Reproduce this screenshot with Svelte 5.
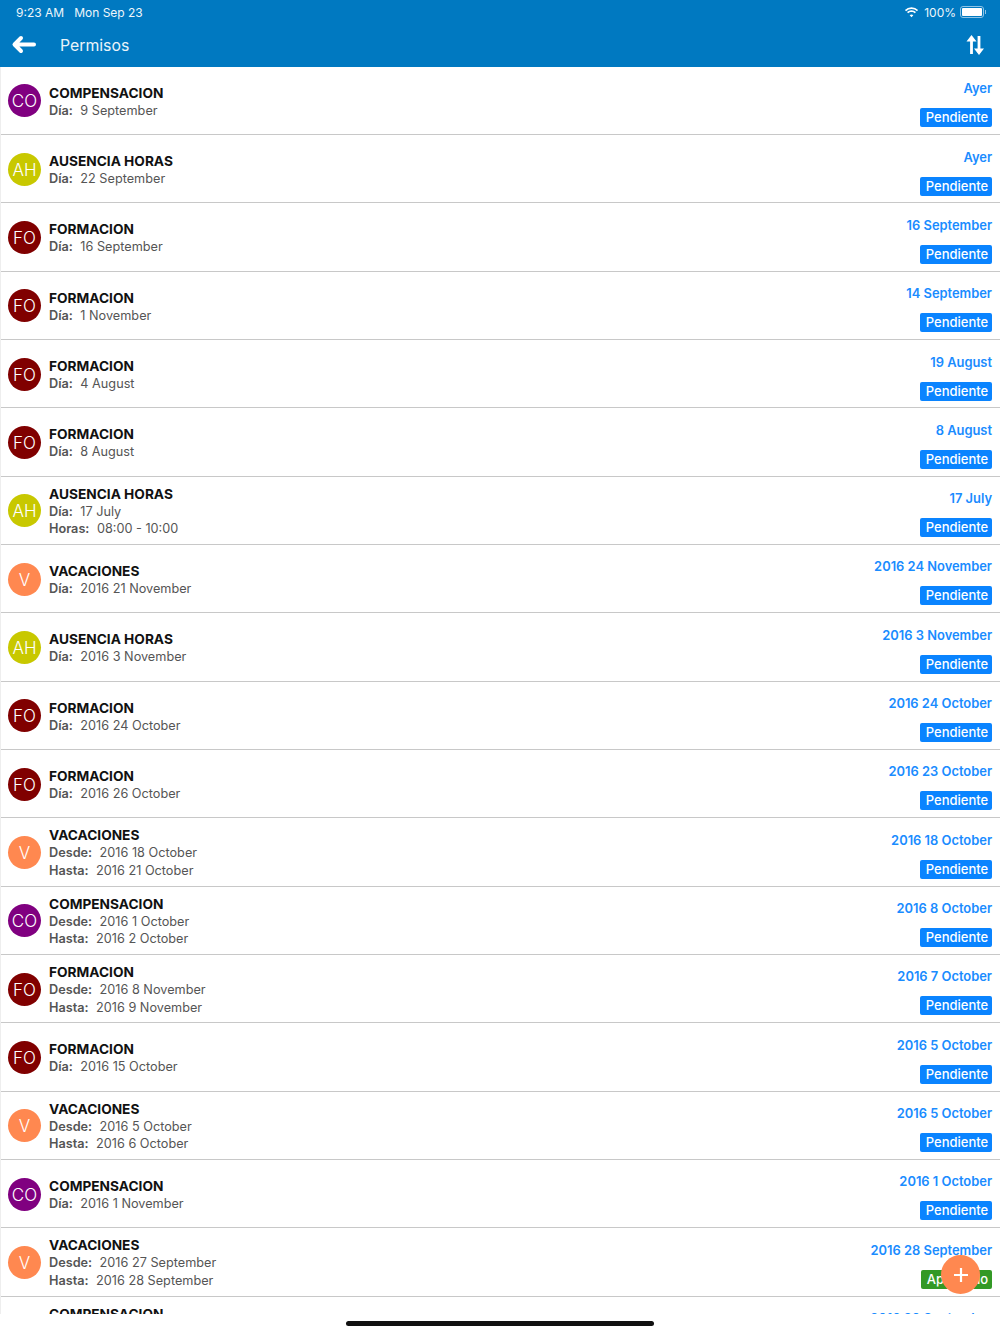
<script>
  const colors = { CO: '#800080', AH: '#c8c800', FO: '#800000', V: '#ff8850' };

  const rows = [
    ['CO', 'COMPENSACION', [['Día', '9 September']], 'Ayer'],
    ['AH', 'AUSENCIA HORAS', [['Día', '22 September']], 'Ayer'],
    ['FO', 'FORMACION', [['Día', '16 September']], '16 September'],
    ['FO', 'FORMACION', [['Día', '1 November']], '14 September'],
    ['FO', 'FORMACION', [['Día', '4 August']], '19 August'],
    ['FO', 'FORMACION', [['Día', '8 August']], '8 August'],
    ['AH', 'AUSENCIA HORAS', [['Día', '17 July'], ['Horas', '08:00 - 10:00']], '17 July'],
    ['V', 'VACACIONES', [['Día', '2016 21 November']], '2016 24 November'],
    ['AH', 'AUSENCIA HORAS', [['Día', '2016 3 November']], '2016 3 November'],
    ['FO', 'FORMACION', [['Día', '2016 24 October']], '2016 24 October'],
    ['FO', 'FORMACION', [['Día', '2016 26 October']], '2016 23 October'],
    ['V', 'VACACIONES', [['Desde', '2016 18 October'], ['Hasta', '2016 21 October']], '2016 18 October'],
    ['CO', 'COMPENSACION', [['Desde', '2016 1 October'], ['Hasta', '2016 2 October']], '2016 8 October'],
    ['FO', 'FORMACION', [['Desde', '2016 8 November'], ['Hasta', '2016 9 November']], '2016 7 October'],
    ['FO', 'FORMACION', [['Día', '2016 15 October']], '2016 5 October'],
    ['V', 'VACACIONES', [['Desde', '2016 5 October'], ['Hasta', '2016 6 October']], '2016 5 October'],
    ['CO', 'COMPENSACION', [['Día', '2016 1 November']], '2016 1 October'],
    ['V', 'VACACIONES', [['Desde', '2016 27 September'], ['Hasta', '2016 28 September']], '2016 28 September', 'Aprobado'],
    ['CO', 'COMPENSACION', [['Desde', '2016 20 September'], ['Hasta', '2016 21 September']], '2016 20 September']
  ];
</script>

<div class="page">
  <header>
    <div class="status">
      <span>9:23 AM</span>
      <span class="date">Mon Sep 23</span>
      <span class="spacer"></span>
      <svg class="wifi" width="15" height="11" viewBox="0 0 16 12">
        <path d="M8 2.200c2.300 0 4.400.9 5.900 2.400L15.200 3.300A10 10 0 0 0 8 .3a10 10 0 0 0-7.200 3l1.300 1.300A8.400 8.400 0 0 1 8 2.200z" fill="#fff"/>
        <path d="M8 5.400c1.400 0 2.700.5 3.700 1.400l1.200-1.300A7 7 0 0 0 8 3.600a7 7 0 0 0-4.900 1.900l1.200 1.300c1-.9 2.300-1.400 3.700-1.400z" fill="#fff"/>
        <path d="M8 8.200c-.8 0-1.500.3-2 .8L8 11.200 10 9c-.5-.5-1.200-.8-2-.8z" fill="#fff"/>
      </svg>
      <span>100%</span>
      <span class="battery"><span class="charge"></span></span>
      <span class="nub"></span>
    </div>
    <div class="toolbar">
      <svg width="26" height="20" viewBox="0 0 26 20">
        <path d="M10 3 3.500 9.500 10 16M4.500 9.500H23" fill="none" stroke="#fff" stroke-width="4" stroke-linecap="round" stroke-linejoin="round"/>
      </svg>
      <span class="title">Permisos</span>
      <span class="spacer"></span>
      <svg class="sort" width="18" height="20" viewBox="0 0 18 20">
        <path d="M5.500 19V2.500M13 1v16.500" fill="none" stroke="#fff" stroke-width="2.800"/>
        <path d="M5.500 0 .5 6.500h10zM13 20l5-6.500H8z" fill="#fff"/>
      </svg>
    </div>
  </header>

  <div class="list">
    {#each rows as [code, name, lines, when, state]}
      <div class="row">
        <div class="avatar" style="background: {colors[code]}">{code}</div>
        <div class="info">
          <div class="name">{name}</div>
          {#each lines as [label, value]}
            <div class="line"><b>{label}:</b>{value}</div>
          {/each}
        </div>
        <div class="side">
          <div class="when">{when}</div>
          <div class="badge" class:ok={state}>{state || 'Pendiente'}</div>
        </div>
      </div>
    {/each}
  </div>

  <div class="home"><span></span></div>

  <button class="fab" aria-label="Añadir">
    <svg width="16" height="16" viewBox="0 0 16 16">
      <path d="M8 1v14M1 8h14" stroke="#fff" stroke-width="2.200"/>
    </svg>
  </button>
</div>

<style>
  :global(body) {
    margin: 0;
    background: #fff;
  }

  .page {
    position: relative;
    width: 1000px;
    height: 1334px;
    overflow: hidden;
    font-family: Inter, "Liberation Sans", sans-serif;
  }

  header {
    height: 66.700px;
    background: #0079c1;
    color: #fff;
  }

  .status {
    height: 24px;
    padding: 0 14px 0 16px;
    display: flex;
    align-items: center;
    gap: 4px;
    font-size: 12px;
    color: #eef6fb;
  }

  .date {
    margin-left: 6px;
  }

  .spacer {
    flex: 1;
  }

  .wifi {
    margin-right: 1px;
  }

  .battery {
    width: 24px;
    height: 12px;
    box-sizing: border-box;
    border: 1px solid #8fc4e6;
    border-radius: 3px;
    padding: 1px;
    display: flex;
  }

  .charge {
    flex: 1;
    background: #fff;
    border-radius: 1px;
  }

  .nub {
    width: 1px;
    height: 4px;
    margin-left: -3px;
    background: #8fc4e6;
  }

  .toolbar {
    height: 42.700px;
    padding: 0 16px 0 11px;
    display: flex;
    align-items: center;
  }

  .title {
    margin-left: 23px;
    font-size: 15.800px;
    color: #eaf4fa;
  }

  .list {
    height: 1247.300px;
    overflow: hidden;
    border-left: 1px solid #eee;
  }

  .row {
    height: 68.340px;
    box-sizing: border-box;
    border-bottom: 1.500px solid #c8c8c8;
    padding: 0 8px 0 7px;
    display: flex;
    align-items: center;
    background: #fff;
  }

  .avatar {
    width: 33px;
    height: 33px;
    margin-top: 1px;
    box-sizing: border-box;
    padding-top: 1px;
    border-radius: 50%;
    color: #fff;
    font-size: 17px;
    font-weight: 300;
    display: flex;
    align-items: center;
    justify-content: center;
    flex-shrink: 0;
  }

  .info {
    margin-left: 8px;
    flex: 1;
    padding-top: 2px;
  }

  .name {
    font-size: 13.700px;
    line-height: 18px;
    font-weight: 700;
    color: #111;
  }

  .line {
    font-size: 12.700px;
    line-height: 17.500px;
    color: #555;
  }

  .line b {
    font-weight: 600;
    margin-right: 7.500px;
  }

  .side {
    align-self: stretch;
    display: flex;
    flex-direction: column;
    align-items: flex-end;
    padding-top: 14.500px;
  }

  .when {
    font-size: 12.900px;
    line-height: 16px;
    font-weight: 600;
    color: #1a8cff;
  }

  .badge {
    margin-top: 11px;
    width: 72px;
    height: 19px;
    box-sizing: border-box;
    border-radius: 2px;
    background: #0a84ff;
    color: #fff;
    font-size: 13px;
    font-weight: 500;
    line-height: 19px;
    text-align: center;
    padding-left: 2px;
  }

  .badge.ok {
    width: 71px;
    background: #339926;
  }

  .home {
    position: absolute;
    left: 0;
    right: 0;
    bottom: 0;
    height: 20px;
    background: #fff;
    display: flex;
    justify-content: center;
  }

  .home span {
    width: 308px;
    height: 5px;
    margin-top: 7px;
    border-radius: 3px;
    background: #111;
  }

  .fab {
    position: absolute;
    left: 941px;
    top: 1255px;
    width: 39px;
    height: 39px;
    padding: 0;
    border: none;
    border-radius: 50%;
    background: #ff8850;
    display: flex;
    align-items: center;
    justify-content: center;
  }
</style>
